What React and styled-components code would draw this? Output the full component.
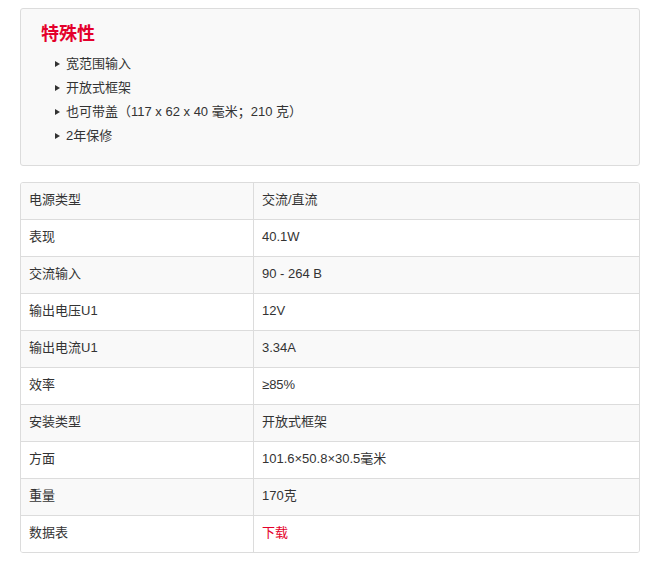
import React from 'react';
import styled, { createGlobalStyle } from 'styled-components';

const GlobalStyle = createGlobalStyle`
  body {
    margin: 0;
    background: #fff;
    font-family: "Liberation Sans", "Noto Sans CJK SC", sans-serif;
    color: #333;
  }
`;

const Page = styled.div`
  margin: 8px 9px 0 20px;
  display: flex;
  flex-direction: column;
  gap: 16px;
`;

const FeatureBox = styled.section`
  background: #f9f9f9;
  border: 1px solid #dcdcdc;
  border-radius: 3px;
  padding: 13px 20px 17px 20px;
`;

const Title = styled.h3`
  margin: 0;
  font-size: 18px;
  line-height: 24px;
  font-weight: bold;
  color: #e4002b;
`;

const List = styled.ul`
  list-style: none;
  margin: 6px 0 0 0;
  padding: 0 0 0 14px;
`;

const Item = styled.li`
  display: flex;
  align-items: center;
  gap: 6px;
  font-size: 13px;
  line-height: 24px;
  color: #333;

  &::before {
    content: "";
    width: 0;
    height: 0;
    border-left: 5px solid #333;
    border-top: 3.5px solid transparent;
    border-bottom: 3.5px solid transparent;
  }
`;

const TableWrap = styled.div`
  border: 1px solid #dcdcdc;
  border-radius: 3px;
  overflow: hidden;
`;

const Table = styled.table`
  width: 100%;
  border-collapse: collapse;
  font-size: 13px;
`;

const Row = styled.tr`
  background: ${p => (p.$odd ? '#f9f9f9' : '#fff')};
  &:not(:last-child) td {
    border-bottom: 1px solid #dcdcdc;
  }
`;

const Cell = styled.td`
  height: 34px;
  padding: 0 8px 2px 8px;
  line-height: 16px;
  vertical-align: middle;
  color: #333;
  &:first-child {
    width: 216px;
    border-right: 1px solid #dcdcdc;
  }
`;

const Link = styled.a`
  color: #e4002b;
  text-decoration: none;
`;

const features = ['宽范围输入', '开放式框架', '也可带盖（117 x 62 x 40 毫米；210 克）', '2年保修'];

const specs = [
  ['电源类型', '交流/直流'],
  ['表现', '40.1W'],
  ['交流输入', '90 - 264 B'],
  ['输出电压U1', '12V'],
  ['输出电流U1', '3.34A'],
  ['效率', '≥85%'],
  ['安装类型', '开放式框架'],
  ['方面', '101.6×50.8×30.5毫米'],
  ['重量', '170克'],
  ['数据表', null],
];

export default function App() {
  return (
    <>
      <GlobalStyle />
      <Page>
        <FeatureBox>
          <Title>特殊性</Title>
          <List>
            {features.map(f => (
              <Item key={f}>{f}</Item>
            ))}
          </List>
        </FeatureBox>
        <TableWrap>
          <Table>
            <tbody>
              {specs.map(([k, v], i) => (
                <Row key={k} $odd={i % 2 === 0}>
                  <Cell>{k}</Cell>
                  <Cell>{v === null ? <Link href="#">下载</Link> : v}</Cell>
                </Row>
              ))}
            </tbody>
          </Table>
        </TableWrap>
      </Page>
    </>
  );
}
